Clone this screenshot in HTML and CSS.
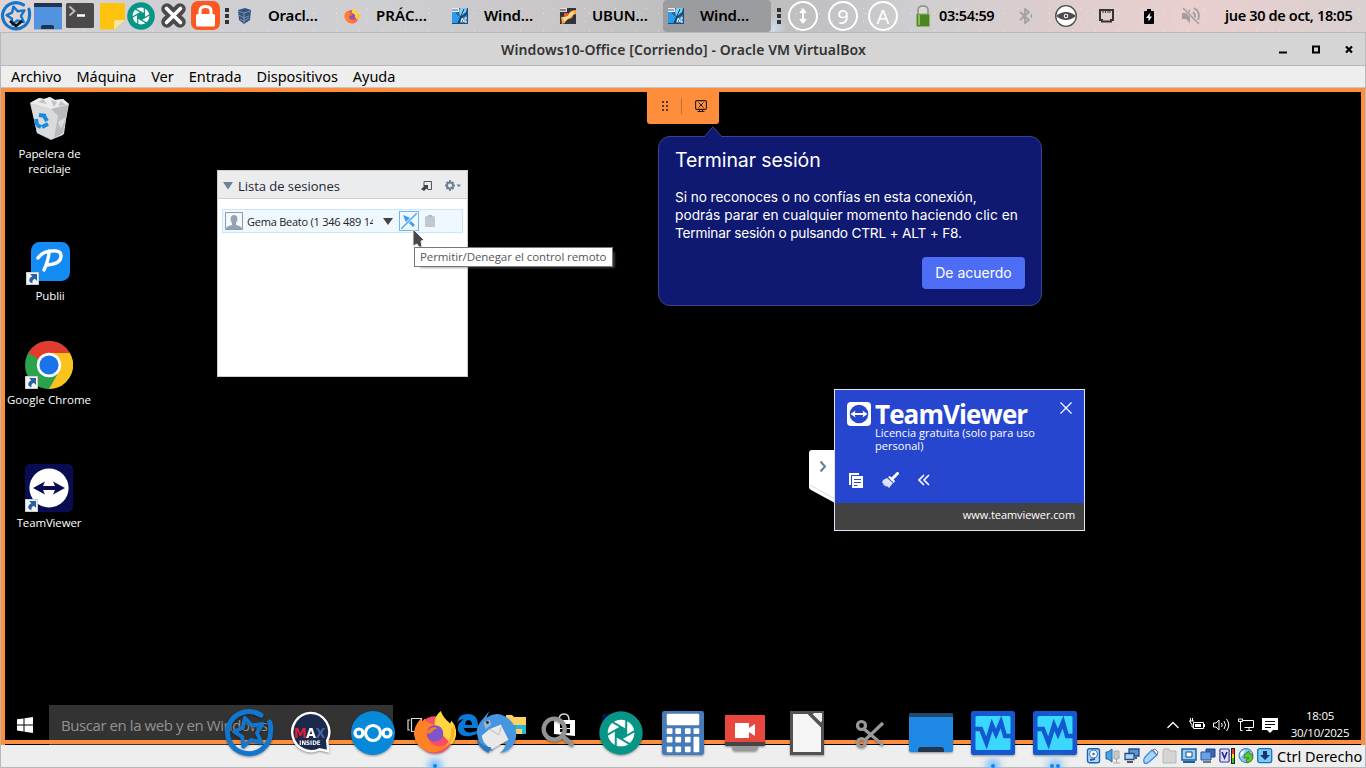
FILE: index.html
```html
<!DOCTYPE html>
<html lang="es">
<head>
<meta charset="utf-8">
<title>Windows10-Office</title>
<link rel="stylesheet" href="styles.css">
</head>
<body>
<svg class="defs" width="0" height="0">
  <symbol id="shutter" viewBox="0 0 44 44">
    <circle cx="22" cy="22" r="21.7" fill="#079686"/>
    <circle cx="22" cy="22" r="13.3" fill="#fff"/>
    <g stroke="#079686" stroke-width="2" fill="none">
      <path id="blade" d="M27.200 19 11 9.600"/>
      <use href="#blade" transform="rotate(60 22 22)"/><use href="#blade" transform="rotate(120 22 22)"/>
      <use href="#blade" transform="rotate(180 22 22)"/><use href="#blade" transform="rotate(240 22 22)"/>
      <use href="#blade" transform="rotate(300 22 22)"/>
    </g>
    <path d="M22 16l5.200 3v6L22 28l-5.200-3v-6z" fill="#079686"/>
  </symbol>
  <symbol id="mx" viewBox="0 0 50 48">
    <path d="M37 6.200A21.500 21 0 1 0 46.500 24q.8-6-.8-11" fill="none" stroke="#1276cf" stroke-width="5" stroke-linecap="round"/>
    <path d="M20.900 9 27.900 16.500 38.400 15 33 23.900 37.400 33.600 27.200 31 19.300 37.500 18.300 27.900 10 22.700 18.800 18.500z" fill="none" stroke="#1276cf" stroke-width="3.900" stroke-linejoin="round"/>
  </symbol>
  <symbol id="firefox" viewBox="0 0 44 46">
    <circle cx="22" cy="25" r="19.500" fill="#f74d68"/>
    <path d="M28 0q-8 7-6 16l17 19q6-6 5-15-1-6-5-10l-1 3Q31 8 28 0z" fill="#ffd63d"/>
    <path d="M41 12q4 12-2 20-6 9-18 9 14-2 17-13 2-7 0-11l3 2z" fill="#ffad2f"/>
    <path d="M7 8q-7 8-7 16 1 13 14 18 13 4 21-7-12 5-19-4-4-7 1-12 3 1 6-3-4-3-8-4-3-1-4-4l-2 3z" fill="#ff8125"/>
    <circle cx="22" cy="23.500" r="8.700" fill="#8055c9"/>
    <path d="M14 21q5-6 11-3-5 1-6 4-4 3-6 1z" fill="#ff7b20"/>
  </symbol>
  <symbol id="winvm" viewBox="0 0 16 16">
    <path d="M0 0h16v16H0z" fill="#1a4f7b"/>
    <path d="M0 4h5l4 4-3 7H0z" fill="#2b9bea"/><path d="M8 0h7l-1 4-6 5-1-6z" fill="#7fcdf8"/>
    <path d="M9 10l6-3v8H8z" fill="#3f86b4"/>
    <path d="M12 1 6 15M4 5l9 7" stroke="#173c5c" stroke-width="1"/><path d="M0 0h7v4H0z" fill="#e3eef5"/>
    <path d="M1 1v2m2-2v2m2-2v2" stroke="#436" stroke-width=".8"/><path d="M9 14l1.500-4 1.500 4m3-4h-2v4h2" stroke="#fff" fill="none"/>
  </symbol>
  <symbol id="lnk" viewBox="0 0 13 13">
    <path d="M0 0h13v13H0z" fill="#b8bcc2"/><path d="M.7.7h11.600v11.600H.7z" fill="#f4f4f4"/>
    <path d="M4 2h7v7L8.800 6.800Q5.800 8 6.500 11.300 1.500 10 4 6q1-1.300 2.300-1.800z" fill="#2b5fa3"/>
  </symbol>
  <symbol id="monitor" viewBox="0 0 44 44">
    <rect width="44" height="44" rx="2.500" fill="#1458d1"/><rect x="4.500" y="5" width="35" height="34" rx="1.500" fill="#3bd7ff"/>
    <path d="M2 18h8l5.500 14L21 14l4 9 5-12 4 14h8" fill="none" stroke="#1458d1" stroke-width="4.300"/>
  </symbol>
  <symbol id="grip" viewBox="0 0 4 16"><path d="M0 0h4v4H0zM0 6h4v4H0zM0 12h4v4H0z" fill="#333"/></symbol>
</svg>

<header class="panel">
  <div class="launchers">
    <svg class="l-mx" viewBox="0 0 32 30"><use href="#mx" width="32" height="30"/><path d="M10 20l6 5 6-5" fill="none" stroke="#111" stroke-width="2.800"/></svg>
    <svg class="l-desk" viewBox="0 0 28 27"><path d="M0 0h28v26.500H0z" fill="#5193df"/><path d="M0 1q0-1 1-1h26q1 0 1 1v3H0z" fill="#21344e"/><path d="M7 26v-2q0-2 2-2h9q2 0 2 2v2z" fill="#21344e"/></svg>
    <svg class="l-term" viewBox="0 0 28 25"><rect width="28" height="25" rx="1.500" fill="#4a4a4a"/><path d="M3.500 3.500 8.500 8l-5 4.500" fill="none" stroke="#bbb" stroke-width="2"/><path d="M11 12.500h8" stroke="#fff" stroke-width="2.500"/></svg>
    <svg class="l-note" viewBox="0 0 25 27"><path d="M0 1q0-1 1-1h23q1 0 1 1v16L14 26.500H1q-1 0-1-1z" fill="#fdc30f"/><path d="M14 26.500V19q0-2 2-2h9z" fill="#fae49b"/></svg>
    <svg class="l-shut"><use href="#shutter"/></svg>
    <svg class="l-x" viewBox="0 0 25 25"><path d="M6 6l13 13M19 6 6 19" stroke="#4b4b4b" stroke-width="11.500" stroke-linecap="round"/><path d="M5.500 5.500l14 14M19.500 5.500l-14 14" stroke="#fff" stroke-width="3.600" stroke-linecap="round"/></svg>
    <svg class="l-lock" viewBox="0 0 29 30"><rect width="29" height="29" rx="7" fill="#ff5722"/><rect x="5" y="13" width="19" height="12.500" rx="1.500" fill="#fff"/><path d="M9 14v-4q0-4.500 5.500-4.500T20 10v4" fill="none" stroke="#fff" stroke-width="3"/></svg>
    <svg class="grip"><use href="#grip"/></svg>
  </div>
  <nav class="tasks">
    <div class="task"><svg viewBox="0 0 16 16"><path d="M2 2l7-2 6 2-1 10-6 4-5-4z" fill="#34527c"/><path d="M2 3l6 2 6-2M8 5v10M3 7l5 3 5-2M4 11l4 2 5-3" fill="none" stroke="#8ba4c4" stroke-width=".8"/></svg><span>Oracl…</span></div>
    <div class="task"><svg><use href="#firefox"/></svg><span class="wide">PRÁC…</span></div>
    <div class="task"><svg><use href="#winvm"/></svg><span>Wind…</span></div>
    <div class="task"><svg viewBox="0 0 16 16"><path d="M0 0h16v16H0z" fill="#33333d"/><path d="M16 2q-5 0-7 3-2 4-8 4l1 7 3-1q0-4 4-4 4-1 4-4l3-1z" fill="#ffa53b"/><path d="M2 9q6 1 8-4l4-2-1 4q-5 3-8 7z" fill="#f6db99"/><path d="M0 0h7v4H0z" fill="#ddd"/><path d="M1 1v2m2-2v2m2-2v2" stroke="#333"/><path d="M4 5h4v3H4z" fill="#f15a24"/></svg><span>UBUN…</span></div>
    <div class="task active"><svg><use href="#winvm"/></svg><span>Wind…</span></div>
  </nav>
  <div class="tray">
    <svg class="grip"><use href="#grip"/></svg>
    <div class="ring"><svg viewBox="0 0 12 18" width="12" height="18"><path d="M6 4v10M3.200 6 6 2.500 8.800 6M3.200 12 6 15.500 8.800 12" fill="none" stroke="#fff" stroke-width="2"/></svg></div>
    <div class="ring">9</div>
    <div class="ring">A</div>
    <svg class="t-bat" viewBox="0 0 14 22"><path d="M2 9V5q0-4 5-4t5 4v4" fill="#d9d9d5" stroke="#8c8f89" stroke-width="1.500"/><rect x=".5" y="9" width="13" height="12.500" rx="1" fill="#4c8423" stroke="#8ab566"/><path d="M3 10v10" stroke="#8dbb5e" stroke-width="2"/></svg>
    <span class="uptime">03:54:59</span>
    <svg class="t-bt" viewBox="0 0 14 16"><path d="M2 4l9 8-4 3V1l4 3-9 8" fill="none" stroke="#a3a1a2" stroke-width="1.900"/><path d="M12 8h1m.5-2v4" stroke="#a3a1a2"/></svg>
    <svg class="t-eye" viewBox="0 0 22 22"><circle cx="11" cy="11" r="10.300" fill="#fff" stroke="#4c4c4c" stroke-width="1.300"/><path d="M1 11q10-8 20 0-10 8-20 0z" fill="#4c4c4c"/><circle cx="11" cy="11" r="2.300" fill="#fff"/><circle cx="11" cy="11" r="1.300" fill="#4c4c4c"/></svg>
    <svg class="t-net" viewBox="0 0 15 14"><path d="M1 1h13v10h-2v1.500H3V11H1z" fill="none" stroke="#353535" stroke-width="2"/><path d="M4 1v3m2.500-3v3M9 1v3m2-3v3" stroke="#353535"/></svg>
    <svg class="t-chg" viewBox="0 0 10 15"><path d="M3 0h4v2h2q1 0 1 1v11q0 1-1 1H1q-1 0-1-1V3q0-1 1-1h2z" fill="#000"/><path d="M6.500 3.500 2 9h2.500v3.500L8 7.500H5.500z" fill="#fff"/></svg>
    <svg class="t-mute" viewBox="0 0 18 18"><path d="M0 6h4l4-4v14l-4-4H0z" fill="#a59c9e"/><path d="M11 5q4 4 0 8m1-12q7 4 4 12" fill="none" stroke="#a59c9e" stroke-width="1.800"/><path d="M1 1l16 16" stroke="#ddd0d0" stroke-width="3"/><path d="M1 1l16 16" stroke="#a59c9e" stroke-width="1.500"/></svg>
    <time class="date">jue 30 de oct, 18:05</time>
  </div>
</header>

<main class="window">
  <div class="titlebar">
    <h1>Windows10-Office [Corriendo] - Oracle VM VirtualBox</h1>
    <div class="controls">
      <svg viewBox="0 0 8 9"><path d="M0 7.500h8" stroke="#000" stroke-width="2"/></svg>
      <svg viewBox="0 0 8 9"><path d="M1 1.500h6v6H1z" fill="none" stroke="#000" stroke-width="2"/></svg>
      <svg viewBox="0 0 8 9"><path d="M1 1.500l6 6m0-6-6 6" stroke="#000" stroke-width="2.200"/></svg>
    </div>
  </div>
  <nav class="menubar"><span>Archivo</span><span>Máquina</span><span>Ver</span><span>Entrada</span><span>Dispositivos</span><span>Ayuda</span></nav>

  <section class="guest">
    <div class="shortcut bin">
      <svg width="40" height="44" viewBox="0 0 40 44"><path d="M0 6l9-5 5 1 6-2 5 3 8-1 6 5-6 31-12 5-14-7z" fill="#c9cbce"/><path d="M1 7l20 5 17-5-4 30-13 5-14-6z" fill="#d9dbdd"/><path d="M0 6l9-5 5 1 6-2 5 3 8-1 6 5-18 5z" fill="#ececec"/><path d="M8 5l5-3 4 5zM21 3l6 2-3 5zM31 4l5 4-8 1z" fill="#bfc1c4"/><path d="M21 12l7 7-4 22 9-5 5-28zM28 25l8-5-5 12z" fill="#b9bbbe"/><path d="M9 18l7 1M6 22l1 6M12 30l6-3M14 19l3 5M7 28l4 2" stroke="#168bdc" stroke-width="4"/></svg>
      <p>Papelera de<br>reciclaje</p>
    </div>
    <div class="shortcut publii">
      <div class="pic"><svg width="39" height="39" viewBox="0 0 39 39"><rect width="39" height="39" rx="8.500" fill="#138bf2"/><path d="M7 16q5-7 14-7 9-1 9 5 0 8-14 9M18 9q0 8-5 19" fill="none" stroke="#fff" stroke-width="3.400" stroke-linecap="round"/></svg><svg class="lnk"><use href="#lnk"/></svg></div>
      <p>Publii</p>
    </div>
    <div class="shortcut chrome">
      <div class="pic"><svg width="48" height="48" viewBox="0 0 48 48"><circle cx="24" cy="24" r="24" fill="#2ba24c"/><path d="M24 24 3.200 12A24 24 0 0 1 44.800 12z" fill="#e33b2e"/><path d="M24 12h20.800A24 24 0 0 1 24 48l10.400-18z" fill="#fcc31e"/><circle cx="24" cy="24" r="12.200" fill="#fff"/><circle cx="24" cy="24" r="9.600" fill="#1a73e8"/></svg><svg class="lnk"><use href="#lnk"/></svg></div>
      <p>Google Chrome</p>
    </div>
    <div class="shortcut tv">
      <div class="pic"><svg width="48" height="48" viewBox="0 0 48 48"><rect width="48" height="48" rx="5" fill="#080d53"/><circle cx="24" cy="24" r="19.600" fill="#fff"/><path d="M8 24l12-6.500-2 4.500h12l-2-4.500L40 24l-12 6.500 2-4.500H18l2 4.500z" fill="#080d53"/></svg><svg class="lnk"><use href="#lnk"/></svg></div>
      <p>TeamViewer</p>
    </div>

    <div class="sessions">
      <header><svg width="10" height="8" viewBox="0 0 10 8"><path d="M0 0h10L5 7.500z" fill="#6c8295"/></svg><h2>Lista de sesiones</h2>
        <svg class="popout" width="11" height="10" viewBox="0 0 11 10"><path d="M3 4V.5h7.500v8H7" fill="none" stroke="#555"/><path d="M2 4h5v5L5.500 7.500 3 10 0 8l3-2.500z" fill="#444"/></svg>
        <svg class="gear" width="16" height="11" viewBox="0 0 16 11"><circle cx="5" cy="5.500" r="3" fill="none" stroke="#6c8295" stroke-width="2"/><path d="M5 0v2.500M5 8.500V11M0 5.500h2M8 5.500h2M1.500 2l1.500 1.500M7 7.500 8.500 9M8.500 2 7 3.500M3 7.500 1.500 9" stroke="#6c8295" stroke-width="1.800"/><path d="M11.500 4.500H16l-2.200 2.700z" fill="#6c8295"/></svg></header>
      <div class="person">
        <svg width="18" height="18" viewBox="0 0 18 18"><path d="M.5.500h17v17H.5z" fill="#f4f8fb" stroke="#8a9cab"/><path d="M1 17q0-3 6-4V11Q5.500 10 5.500 6.500 6 3 9 3t3.500 3.500Q12.500 10 11 11v2q6 1 6 4z" fill="#91a5b7"/></svg>
        <span class="name">Gema Beato (1 346 489 14</span>
        <svg width="10" height="7" viewBox="0 0 10 7"><path d="M0 0h10L5 7z" fill="#444"/></svg>
        <span class="deny"><svg width="16" height="16" viewBox="0 0 16 16"><path d="M2 2l10 4-3 1 5 5-2 2-5-5-1 3z" fill="#3c9df4"/><path d="M0 16 16 0" stroke="#f0f8ff" stroke-width="3"/><path d="M0 16 16 0" stroke="#4da6f5" stroke-width="1.400"/></svg></span>
        <svg width="10" height="12" viewBox="0 0 10 12"><rect y="1" width="10" height="11" rx="1.500" fill="#bfc8d2"/><path d="M3 0h4v2H3z" fill="#aeb9c5"/></svg>
      </div>
    </div>
    <div class="tip">Permitir/Denegar el control remoto</div>
    <svg class="pointer" width="14" height="20" viewBox="0 0 14 20"><path d="M1 1l11 11-3 1 1 6H7L5 16l-4 2z" fill="#484848" stroke="#eee"/></svg>

    <div class="tab"><svg width="6" height="10" viewBox="0 0 6 10"><path d="M0 0h2v2H0zm4 0h2v2H4zM0 4h2v2H0zm4 0h2v2H4zM0 8h2v2H0zm4 0h2v2H4z" fill="#5d3517"/></svg><i></i><svg width="12" height="12" viewBox="0 0 12 12"><rect x=".6" y=".6" width="10.800" height="8.800" rx="1.200" fill="none" stroke="#2a1b12" stroke-width="1.100"/><path d="M3.500 2.500l5 5m0-5-5 5M2.500 11.500h7M4.500 9.500v2m3-2v2" stroke="#2a1b12"/></svg></div>

    <aside class="callout">
      <svg class="notch" width="18" height="11" viewBox="0 0 18 11"><path d="M0 11 9 .700 18 11" fill="#0f1971" stroke="#3b458d"/></svg>
      <h2>Terminar sesión</h2>
      <p><span class="c1">Si no reconoces o no confías en esta conexión,</span><br><span class="c2">podrás parar en cualquier momento haciendo clic en</span><br><span class="c3">Terminar sesión o pulsando CTRL + ALT + F8.</span></p>
      <button>De acuerdo</button>
    </aside>

    <svg class="flap" width="26" height="54" viewBox="0 0 26 54"><path d="M3 0h23v53L2 40q-2-1-2-3V3q0-3 3-3z" fill="#fff"/><path d="M1 35l25 14" stroke="#ddd"/><path d="M11.500 11.500l4.500 5-4.500 5" fill="none" stroke="#667e91" stroke-width="2"/></svg>
    <div class="viewer">
      <div class="blue">
        <div class="brand"><svg width="24" height="24" viewBox="0 0 24 24"><rect width="24" height="24" rx="4" fill="#fff"/><circle cx="12" cy="12" r="9.300" fill="#2746cf"/><path d="M3.500 12 8.500 8.500l-.7 2.500h8.400l-.7-2.500 5 3.500-5 3.500.7-2.500H7.800l.7 2.500z" fill="#fff"/></svg><strong>TeamViewer</strong>
        <svg class="close" width="12" height="12" viewBox="0 0 12 12"><path d="M.5.500l11 11m0-11-11 11" stroke="#fff" stroke-width="1.200"/></svg></div>
        <p>Licencia gratuita (solo para uso<br>personal)</p>
        <div class="tools">
          <svg width="14" height="15" viewBox="0 0 14 15"><path d="M0 0h10v2H2v10H0z" fill="#fff"/><path d="M3 3h11v12H3z" fill="#fff"/><path d="M5 6.500h7M5 9.500h7M5 12.500h3.500" stroke="#2746cf"/></svg>
          <svg width="17" height="16" viewBox="0 0 17 16"><path d="M1 8l4-2 6 5-4 5-2-2-1 1-1-2-1 1-1-3-1 0z" fill="#dce2ff"/><path d="M6 5l2-1 5 5-1 2z" fill="#fff"/><path d="M10 7l5.500-5.500" stroke="#fff" stroke-width="3" stroke-linecap="round"/></svg>
          <svg width="12" height="12" viewBox="0 0 12 12"><path d="M6 1 1 6l5 5M11 1 6 6l5 5" fill="none" stroke="#fff" stroke-width="1.600"/></svg>
        </div>
      </div>
      <footer>www.teamviewer.com</footer>
    </div>

    <div class="taskbar">
      <svg class="start" width="16" height="16" viewBox="0 0 16 16"><path d="M0 2.300 6.500 1.400v6H0zM7.500 1.200 16 0v7.400H7.500zM0 8.500h6.500v6L0 13.600zM7.500 8.500H16V16l-8.500-1.200z" fill="#fff"/></svg>
      <div class="search"><span>Buscar en la web y en Windows</span></div>
      <svg class="pins" width="230" height="36" viewBox="0 0 230 36">
        <path d="M17 15h-2v10h2M31 15h2v10h-2M18.500 13.500h10v13h-10z" fill="none" stroke="#ddd" stroke-width="1.200"/>
        <path d="M64 21q0-12 11-12 10 0 10 12v2H71q1 7 13 3v3q-16 6-19-4-1-7 6-11-8 1-7 7zm8-1h7q0-5-4-5-3 1-3 5z" fill="#0a7ad8"/>
        <path d="M113 10h6l2 2h12v17h-20z" fill="#fbd365"/><path d="M113 20h20v9h-4v-5h-12v5h-4z" fill="#26b8df"/>
        <path d="M161 15h21v16l-21-2z" fill="#fff"/><path d="M166 15q0-6 5-6t5 6" fill="none" stroke="#ddd" stroke-width="1.500"/><path d="M167 19h4v4h-4zm5 0h5v4h-5zm-5 5h4v3h-4zm5 0h5v4h-5z" fill="#000"/>
        <path d="M209 9h22v22h-22z" fill="#080d53"/>
      </svg>
      <div class="notify">
        <svg width="12" height="8" viewBox="0 0 12 8"><path d="M.5 7 6 1.500 11.500 7" fill="none" stroke="#fff" stroke-width="1.300"/></svg>
        <svg width="16" height="14" viewBox="0 0 16 14"><path d="M4.500 4.500h10v6h-10zM15.500 6v3M0 3h5M1.500 0v3m2-3v3M1 3q0 3 2 3v3h2" fill="none" stroke="#fff"/><path d="M6 6h6v3H6z" fill="#fff"/></svg>
        <svg width="17" height="14" viewBox="0 0 17 14"><path d="M.5 5H3l3-3v10L3 9H.5zM8.500 5q1.500 2 0 4M11 3q3 4 0 8M13.500 1q4.500 6 0 12" fill="none" stroke="#fff"/></svg>
        <svg width="16" height="14" viewBox="0 0 16 14"><path d="M5 2.500h10.500v7h-9M8 12.500h6m-3-3v3M.5 1v2.500h4V1zM2.500 3.500v9h2" fill="none" stroke="#fff"/></svg>
        <svg width="16" height="17" viewBox="0 0 16 17"><path d="M0 1h16v12h-5l-3 3-3-3H0z" fill="#fff"/><path d="M3 4.500h10M3 7.500h10M3 10.500h6" stroke="#000" stroke-width="1.200"/></svg>
      </div>
      <div class="clock">18:05<br>30/10/2025</div>
    </div>
  </section>

  <footer class="status">
    <svg viewBox="0 0 16 16"><rect x="1.500" y=".7" width="12" height="14" rx="2" fill="#bcd9f5" stroke="#1963b4" stroke-width="1.400"/><circle cx="7.500" cy="6" r="4" fill="#fff" stroke="#2d79c9"/><circle cx="7.500" cy="6" r="1.200" fill="#1963b4"/><path d="M4 12l5-1" stroke="#1963b4" stroke-width="2"/></svg>
    <svg viewBox="0 0 16 16"><path d="M1 4h2l4-3v13l-4-3H1z" fill="#4aa5e0" stroke="#1d65a8"/><path d="M9 3h5v7H9zM8 9q3 5 7 0M11.500 12v3M8 15h7" fill="#c9c9c9" stroke="#aaa"/></svg>
    <svg viewBox="0 0 16 16"><path d="M5 1h10v7H5z" fill="#5b96d8" stroke="#244e86" stroke-width="1.300"/><path d="M1 5.500h9v6H1z" fill="#b2d7f6" stroke="#244e86" stroke-width="1.300"/><path d="M3 14h6m3-5v2" stroke="#555" stroke-width="2"/></svg>
    <svg viewBox="0 0 16 16"><path d="M9 2l5 5-8 7q-4 3-5 0-1-3 2-6z" fill="#a9d5ff" stroke="#398ce1" stroke-width="1.300"/><path d="M10 2l2-1 3 3-1 3z" fill="#f1f1f1" stroke="#777"/></svg>
    <svg viewBox="0 0 16 16"><path d="M1 3l1-2h5l1 2h6v12H1z" fill="#d4d4d4" stroke="#b7b7b7"/></svg>
    <svg viewBox="0 0 16 16"><path d="M1 1h14v11H1z" fill="#9bd0f5" stroke="#1d5da8" stroke-width="1.500"/><path d="M5 4h6v5H5z" fill="#fff" stroke="#174a86"/><path d="M2 14h12" stroke="#1d5da8" stroke-width="2"/></svg>
    <svg viewBox="0 0 16 16"><path d="M6 1h9v8H6z" fill="#3568b5" stroke="#21448f"/><path d="M1 4h10v8H1z" fill="#67a2e3" stroke="#2953a0"/><path d="M3 14h8" stroke="#777" stroke-width="2"/></svg>
    <svg viewBox="0 0 16 16"><path d="M1 1h9v13H1z" fill="#dfe2ff" stroke="#34349c"/><path d="M3 4l2.500 6L8 4" fill="none" stroke="#25258d" stroke-width="1.600"/><path d="M0 3h1m9 0h1M0 6h1m9 0h1M0 9h1m9 0h1M0 12h1m9 0h1" stroke="#34349c"/><path d="M12 0h4v16h-4z" fill="#222"/><path d="M13 1h2v5h-2z" fill="#f13b18"/><path d="M13 6h2v4h-2z" fill="#f3dc18"/><path d="M13 10h2v5h-2z" fill="#32c52a"/></svg>
    <svg viewBox="0 0 16 16"><circle cx="8" cy="7.500" r="7" fill="#8cc4f0" stroke="#377bb8"/><path d="M6 7l5-4v2q4 1 4 5-1 4-6 5l-1-3 3-2-5 0z" fill="#62c531" stroke="#27731b" stroke-width=".8"/><path d="M3 4l4-2-2 5-3 2z" fill="#efffff"/></svg>
    <svg viewBox="0 0 16 16"><rect x=".7" y=".7" width="14" height="14" rx="2" fill="#7bc9fa" stroke="#1b73bb" stroke-width="1.300"/><path d="M6 3h4v4h3l-5 5-5-5h3z" fill="#16346a"/></svg>
    <span>Ctrl Derecho</span>
  </footer>
</main>

<div class="dock">
  <svg class="mxd" width="50" height="48"><use href="#mx"/></svg>
  <svg class="max" viewBox="0 0 44 46"><path d="M22 2a20 20 0 1 0 10 38l9 2-1-11A20 20 0 0 0 22 2z" fill="#1b294d" stroke="#fff" stroke-width="2.500"/><g text-anchor="middle"><text x="12" y="28" font-size="15" fill="#df2035">M</text><text x="23" y="28" font-size="15" fill="#fff">A</text><text x="33" y="28" font-size="15" fill="#4861a5">X</text><text x="22" y="36" font-size="6.500" fill="#fff">INSIDE</text></g></svg>
  <svg viewBox="0 0 44 44"><circle cx="22" cy="22" r="22" fill="#0789d9"/><g fill="none" stroke="#fff" stroke-width="3.200"><circle cx="22" cy="22" r="7.500"/><circle cx="8" cy="22" r="4"/><circle cx="36" cy="22" r="4"/></g></svg>
  <div class="app"><svg viewBox="0 0 44 46"><use href="#firefox"/></svg><i class="glow"></i></div>
  <svg viewBox="0 0 44 46"><path d="M14 0l-3 7Q22-1 34 8q9 8 8 19-2 14-17 17 10-8 3-16L16 42Q1 36 1 21q0-5 4-10l5-6z" fill="#4695e0"/><path d="M14 19l12-5 8 16-17 10Q7 35 6 26z" fill="#e9e9e9"/><path d="M14 19l10 6 3-10" fill="none" stroke="#bbb"/><path d="M0 29q8 9 16 9l-3 6Q3 39 0 29z" fill="#2978bd"/><path d="M8 12l6-3 2 5-6 5z" fill="#9db6d0"/><circle cx="12" cy="12" r="1.500" fill="#222"/></svg>
  <svg viewBox="0 0 44 46"><circle cx="17" cy="19" r="11" fill="none" stroke="#929292" stroke-width="4.500"/><path d="M25 26l12 10" stroke="#929292" stroke-width="5"/></svg>
  <svg><use href="#shutter"/></svg>
  <svg viewBox="0 0 44 46"><rect width="44" height="46" rx="2.500" fill="#477ab9"/><rect x="5" y="3" width="34" height="12" rx="1.500" fill="#fff"/><g fill="#fff"><rect x="5" y="18" width="6" height="6" rx="1"/><rect x="14" y="18" width="6" height="6" rx="1"/><rect x="24" y="18" width="6" height="6" rx="1"/><rect x="33" y="18" width="6" height="6" rx="1"/><rect x="5" y="27" width="6" height="6" rx="1"/><rect x="14" y="27" width="6" height="6" rx="1"/><rect x="24" y="27" width="6" height="6" rx="1"/><rect x="5" y="37" width="6" height="6" rx="1"/><rect x="14" y="37" width="6" height="6" rx="1"/><rect x="24" y="37" width="6" height="6" rx="1"/><rect x="33" y="27" width="6" height="16" rx="1"/></g></svg>
  <svg viewBox="0 0 44 44"><path d="M9 34h26v3l-2 3H11l-2-3z" fill="#999"/><rect x="2" y="4" width="40" height="30" rx="1" fill="#e8473e"/><path d="M2 31h40v3q0 1-1 1H3q-1 0-1-1z" fill="#454545"/><path d="M12 12h14v5l6-4v12l-6-4v6H12z" fill="#fff"/></svg>
  <svg viewBox="0 0 44 44"><path d="M6.500 1.500h31v41h-31z" fill="#f5f5f5" stroke="#525252" stroke-width="3"/><path d="M24 2l13 13" stroke="#525252" stroke-width="3.500"/><path d="M28 2h9v9z" fill="#eee"/></svg>
  <svg viewBox="0 0 44 44"><g fill="none" stroke="#999" stroke-width="3.200"><circle cx="14.500" cy="14.500" r="4"/><circle cx="14.500" cy="31.500" r="4"/><path d="M17 18l19 16M18 29l18-17"/></g></svg>
  <svg viewBox="0 0 44 44"><rect y="2" width="44" height="39" rx="2" fill="#1e88e5"/><path d="M0 6V4q0-2 2-2h40q2 0 2 2v2z" fill="#24476a"/><path d="M9 41v-2q0-3 3-3h20q3 0 3 3v2z" fill="#22364f"/></svg>
  <div class="app"><svg><use href="#monitor"/></svg><i class="glow"></i></div>
  <div class="app"><svg><use href="#monitor"/></svg><i class="glow two"></i></div>
</div>
</body>
</html>
```
FILE: styles.css
```css
* { box-sizing: border-box; }
body { margin: 0; width: 1366px; height: 768px; overflow: hidden; display: flex; flex-direction: column; position: relative; background: #000; font-family: "Noto Sans", sans-serif; color: #000; }
h1, h2, p { margin: 0; font-weight: 400; }
svg { display: block; flex: none; }
.defs { position: absolute; }

/* host panel */
.panel { height: 32px; flex: none; display: flex; background:
  radial-gradient(circle, #fff9 0 .6px, transparent 1px) 3px 5px / 23px 17px,
  radial-gradient(circle, #fff7 0 .6px, transparent 1px) 11px 2px / 31px 13px,
  radial-gradient(circle, #ccdceb 0, transparent 14px) 90px 12px / 1366px 32px no-repeat,
  linear-gradient(90deg, #e3d4d3, #d0d0d5 8%, #cfced1 27%, #c8c6c7 42%, #bbb 52%, #c1c1c3 60%, #cfcfd1 67%, #dccdcd 76%, #eacfcf 87%, #d9d0d0); }
.launchers { width: 231px; height: 32px; display: flex; align-items: flex-start; flex: none; }
.l-mx { width: 32px; height: 30px; margin-top: 1px; }
.l-desk { width: 28px; height: 27px; margin: 3px 0 0 2px; }
.l-term { width: 28px; height: 25px; margin: 3px 0 0 4px; }
.l-note { width: 25px; height: 27px; margin: 3px 0 0 6px; }
.l-shut { width: 28px; height: 28px; margin: 2px 0 0 2px; }
.l-x { width: 25px; height: 25px; margin: 3px 0 0 6px; }
.l-lock { width: 29px; height: 30px; margin: 1px 0 0 5px; }
.grip { width: 4px; height: 16px; margin: 8px 0 0 5px; }
.tasks { display: grid; grid-template-columns: repeat(5, 108px); flex: none; }
.task { display: flex; align-items: center; padding-left: 5px; gap: 16px; font-size: 15px; font-weight: 600; }
.task svg { width: 16px; height: 16px; }
.task span { letter-spacing: -.2px; line-height: 20px; padding-bottom: 2px; }
.task .wide { letter-spacing: .1px; }
.active { background: #9b9c9f; border-radius: 4px; }
.tray { display: flex; align-items: center; flex: 1; }
.tray .grip { margin: 0 7px 0 6px; }
.ring { width: 30px; height: 30px; border: 2px solid #fff; border-radius: 50%; color: #fff; display: flex; align-items: center; justify-content: center; font-size: 20px; font-weight: 400; margin-right: 10px; flex: none; }
.t-bat { width: 14px; height: 22px; margin-left: 8px; }
.uptime { width: 57px; margin-left: 9px; font-size: 14.500px; font-weight: 600; letter-spacing: -.3px; line-height: 20px; padding-bottom: 2px; white-space: nowrap; }
.t-bt { width: 14px; height: 16px; margin-left: 22px; }
.t-eye { width: 22px; height: 22px; margin-left: 23px; }
.t-net { width: 15px; height: 14px; margin-left: 22px; }
.t-chg { width: 10px; height: 15px; margin-left: 30px; }
.t-mute { width: 18px; height: 18px; margin-left: 28px; }
.date { margin-left: 25px; font-size: 14.500px; font-weight: 600; letter-spacing: -.35px; line-height: 20px; padding-bottom: 2px; white-space: nowrap; }

/* virtual machine window */
.window { flex: 1; display: flex; flex-direction: column; border: 1px solid #b9b9b9; background: #eee; }
.titlebar { height: 33px; background: #d5d5d5; border-bottom: 1px solid #b8b8b8; display: grid; grid-template-columns: 1fr auto 1fr; align-items: center; }
.titlebar h1 { grid-column: 2; font-size: 14px; font-weight: 600; color: #333; letter-spacing: .09px; padding-left: 1px; white-space: nowrap; }
.controls { display: flex; justify-content: flex-end; gap: 25px; padding-right: 12px; }
.controls svg { width: 8px; height: 9px; }
.menubar { height: 22px; display: flex; align-items: center; gap: 15px; padding: 0 0 2px 10px; font-size: 14.500px; letter-spacing: -.04px; border-bottom: 1px solid #c6c6c6; white-space: nowrap; }
.guest { height: 657px; flex: none; position: relative; background: #000; border: 4px solid #ff8e3c; border-bottom: 0; font-family: "Open Sans", "Noto Sans", sans-serif; display: flex; flex-direction: column; justify-content: flex-end; }
.guest::after { content: ""; position: absolute; left: 0; right: 0; bottom: 1px; height: 4px; background: #ff8e3c; }

/* desktop shortcuts */
.shortcut { position: absolute; left: -6px; width: 100px; display: flex; flex-direction: column; align-items: center; color: #fff; font-size: 11.500px; line-height: 15px; text-align: center; }
.shortcut p { white-space: nowrap; letter-spacing: -.15px; }
.pic { position: relative; }
.lnk { position: absolute; width: 13px; height: 13px; left: 0; bottom: 0; }
.bin { top: 5px; gap: 5px; left: -5px; }
.bin p { padding-right: 1px; }
.publii { top: 150px; gap: 7px; left: -5px; }
.publii .lnk { left: -5px; bottom: -4px; }
.chrome { top: 249px; gap: 3px; }
.chrome p { letter-spacing: .02px; }
.tv { top: 372px; gap: 3px; }

/* session list */
.sessions { position: absolute; left: 212px; top: 78px; width: 251px; height: 207px; background: #fff; border: 1px solid #c9cdd1; }
.sessions header { height: 28px; display: flex; align-items: center; padding: 2px 6px 0 5px; background: #ebeced; border-bottom: 1px solid #cdd0d3; }
.sessions h2 { font-size: 13px; letter-spacing: -.03px; margin-left: 5px; flex: 1; color: #1c2736; }
.gear { margin-left: 13px; }
.person { margin: 10px 4px 0; height: 24px; background: #f0f8ff; border: 1px solid #c9e7fb; display: flex; align-items: center; padding-left: 2px; font-size: 11px; color: #222; }
.name { width: 126px; margin: 0 10px 0 4px; overflow: hidden; white-space: nowrap; letter-spacing: -.24px; }
.deny { width: 20px; height: 20px; border: 1px solid #6eb6f6; margin: 0 6px 0 6px; display: grid; place-items: center; }
.tip { position: absolute; left: 409px; top: 155px; width: 199px; height: 20px; background: #fff; border: 1px solid #777; box-shadow: 4px 3px 2px -2px #6668; font-size: 11.500px; line-height: 18px; padding-left: 5px; color: #575757; letter-spacing: -.09px; white-space: nowrap; }
.pointer { position: absolute; left: 407px; top: 136px; clip-path: inset(0 0 1px); }

/* session bar and callout */
.tab { position: absolute; left: 642px; top: 0; width: 72px; height: 32px; border-radius: 0 0 3px 3px; background: #ff8e3c; display: flex; align-items: center; padding: 0 12px 4px 15px; justify-content: space-between; }
.tab i { width: 1px; height: 16px; background: #bd7136; }
.callout { position: absolute; left: 653px; top: 44px; width: 384px; height: 170px; background: #0f1971; border: 1px solid #3b458d; border-radius: 12px; color: #fff; padding: 10px 16px; display: flex; flex-direction: column; font-family: Inter, "Open Sans", sans-serif; }
.notch { position: absolute; left: 45px; top: -11px; }
.callout h2 { font-size: 19.500px; line-height: 26px; letter-spacing: -.1px; white-space: nowrap; }
.callout p { font-size: 13.700px; line-height: 18px; margin-top: 15px; white-space: nowrap; }
.c1 { letter-spacing: -.09px; }
.c2 { letter-spacing: .04px; }
.c3 { letter-spacing: -.22px; }
.callout button { width: 103px; height: 32px; margin: 15px 0 0 auto; border: 0; border-radius: 4px; background: #4d6ef4; color: #fff; font: 14px Inter, sans-serif; padding: 0 0 2px; }

/* TeamViewer panel */
.flap { position: absolute; left: 804px; top: 358px; }
.viewer { position: absolute; left: 829px; top: 297px; width: 251px; height: 142px; border: 1px solid #dfe5f5; color: #fff; font-size: 11px; display: flex; flex-direction: column; }
.blue { height: 113px; background: #2746cf; padding: 12px; }
.brand { display: flex; height: 24px; align-items: center; }
.brand strong { font: 700 26px/24px "Open Sans", sans-serif; margin-left: 4px; letter-spacing: -.9px; }
.close { margin: -12px 0 0 auto; }
.viewer p { margin-left: 28px; line-height: 13px; white-space: nowrap; letter-spacing: .03px; }
.tools { display: flex; align-items: center; margin: 20px 0 0 2px; }
.tools svg + svg { margin-left: 19px; }
.viewer footer { flex: 1; background: #424242; text-align: right; padding: 4px 9px; line-height: 15px; letter-spacing: -.07px; }

/* guest taskbar */
.taskbar { height: 40px; display: flex; color: #fff; }
.start { margin: 12px 16px 0 12px; }
.search { width: 344px; height: 40px; background: #333; color: #929292; font-size: 15px; line-height: 41px; padding-left: 12px; white-space: nowrap; }
.search span { letter-spacing: -.43px; }
.pins { margin-right: 544px; }
.notify { height: 40px; display: flex; align-items: center; gap: 8px; }
.notify svg:first-child { margin-right: 2px; }
.clock { flex: 1; text-align: center; font-size: 11.500px; line-height: 17px; letter-spacing: -.25px; padding: 2px 0 0 1px; }

/* machine status icons */
.status { flex: 1; display: flex; align-items: center; justify-content: flex-end; gap: 3px; padding-right: 2px; }
.status svg { width: 16px; height: 16px; }
.status span { width: 86px; font-size: 14.500px; white-space: nowrap; margin-left: 1px; }

/* dock */
.dock { position: absolute; left: 218px; top: 708px; display: grid; grid-template-columns: repeat(14, 62px); height: 60px; justify-items: center; padding-top: 3px; }
.dock svg { width: 44px; height: 44px; filter: drop-shadow(0 1px 1px #0006); }
.dock .mxd { width: 50px; height: 48px; margin-top: -2px; }
.max { font-family: "DejaVu Sans Condensed", "Liberation Sans", sans-serif; font-weight: 700; margin-left: -2px; }
.app { position: relative; }
.glow { position: absolute; left: 20px; top: 53px; width: 4px; height: 4px; border-radius: 50%; background: #1684f1; box-shadow: 0 0 7px 5px #7bbdfa; }
.two { left: 17px; box-shadow: 6px 0 #1684f1, 3px 0 8px 5px #7bbdfa; }
```
